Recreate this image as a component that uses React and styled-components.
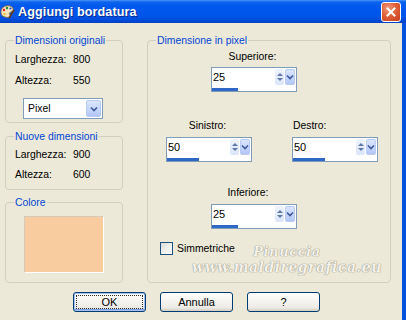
import React from "react";
import styled, { createGlobalStyle } from "styled-components";

const GlobalStyle = createGlobalStyle`
  html, body { margin: 0; padding: 0; background: #ece9d8; }
  body {
    font-family: "Liberation Sans", Arial, sans-serif;
    font-size: 10.4px;
    color: #000;
  }
`;

const Window = styled.div`
  width: 406px;
  height: 320px;
  display: flex;
  flex-direction: column;
  overflow: hidden;
`;

const TitleBar = styled.div`
  height: 23px;
  flex: none;
  display: flex;
  align-items: center;
  padding-right: 5px;
  background: linear-gradient(
    to bottom,
    #4a95f8 0%,
    #0c63ec 9%,
    #0058ee 28%,
    #0055ea 70%,
    #0049d6 90%,
    #003fbf 100%
  );
`;

const TitleText = styled.div`
  flex: 1;
  margin-left: 3px;
  color: #fff;
  font-weight: bold;
  font-size: 12.6px;
  letter-spacing: 0.1px;
  text-shadow: 1px 1px 0 #0a2a88;
`;

const CloseButton = styled.div`
  width: 18px;
  height: 18px;
  border: 1px solid #fff;
  border-radius: 3px;
  display: flex;
  align-items: center;
  justify-content: center;
  background: radial-gradient(circle at 35% 30%, #f19a7c 0%, #e0603a 45%, #c2401c 100%);
`;

const Frame = styled.div`
  flex: 1;
  display: flex;
  flex-direction: column;
  background: #ece9d8;
  border-right: 4px solid #0451de;
  padding: 11px 0 0 5px;
`;

const Columns = styled.div`
  display: grid;
  grid-template-columns: 118px 244px;
  column-gap: 24px;
  height: 249px;
`;

const Stack = styled.div`
  display: flex;
  flex-direction: column;
`;

const Group = styled.fieldset`
  margin: 0;
  margin-top: ${(p) => p.$top || 0}px;
  padding: 0;
  min-width: 0;
  box-sizing: border-box;
  border: 1px solid #d0d0bf;
  border-radius: 4px;
  height: ${(p) => (p.$h ? `${p.$h}px` : "auto")};
  flex: ${(p) => (p.$grow ? 1 : "none")};
  position: relative;
`;

const Legend = styled.legend`
  margin-left: 8px;
  padding: 0 1px;
  color: #0046d5;
  line-height: 13px;
`;

const InfoList = styled.div`
  display: flex;
  flex-direction: column;
  padding: ${(p) => p.$top || 0}px 0 0 9px;
`;

const InfoRow = styled.div`
  display: grid;
  grid-template-columns: 58px auto;
  height: ${(p) => p.$h || 21}px;
  align-items: center;
`;

const Select = styled.div`
  width: 80px;
  height: 21px;
  box-sizing: border-box;
  margin: 7px 0 0 17px;
  border: 1px solid #7f9db9;
  background: #fff;
  display: flex;
  align-items: center;
  justify-content: space-between;
  padding: 1px 1px 1px 4px;
`;

const DropButton = styled.div`
  width: ${(p) => p.$w || 15}px;
  height: ${(p) => p.$hgt || 17}px;
  box-sizing: border-box;
  border: 1px solid #b8cbf4;
  border-radius: 2px;
  background: linear-gradient(to bottom, #dbe6fd 0%, #c3d4fc 60%, #b2c6f5 100%);
  display: flex;
  align-items: center;
  justify-content: center;
`;

const Swatch = styled.div`
  width: 80px;
  height: 57px;
  box-sizing: border-box;
  margin: 7px 0 0 18px;
  background: #f9cc9f;
  border-top: 1px solid #d3cab9;
  border-left: 1px solid #d3cab9;
  border-bottom: 1px solid #fff;
  border-right: 1px solid #fff;
`;

const FieldRow = styled.div`
  display: flex;
  gap: ${(p) => p.$gap || 0}px;
  padding-left: ${(p) => p.$indent || 0}px;
  margin-top: ${(p) => p.$top || 0}px;
`;

const SpinField = styled.div`
  display: flex;
  flex-direction: column;
  align-items: ${(p) => (p.$align === "left" ? "flex-start" : "center")};
  width: 86px;
`;

const FieldLabel = styled.div`
  line-height: 13px;
  margin-bottom: ${(p) => p.$gap || 4}px;
  padding-left: ${(p) => (p.$align === "left" ? 1 : 0)}px;
  margin-right: ${(p) => p.$shift || 0}px;
`;

const SpinBox = styled.div`
  width: 86px;
  height: 25px;
  box-sizing: border-box;
  border: 1px solid #7f9db9;
  background: #fff;
  display: flex;
  flex-direction: column;
  justify-content: space-between;
`;

const SpinTop = styled.div`
  display: flex;
  align-items: flex-start;
  padding: 1px 1px 0 1px;
`;

const SpinValue = styled.div`
  flex: 1;
  font-size: 11px;
  line-height: 15px;
  padding-top: 1px;
`;

const ArrowPair = styled.div`
  width: 9px;
  height: 16px;
  box-sizing: border-box;
  border-radius: 2px;
  background: linear-gradient(to bottom, #eef3fe 0%, #dbe5fb 100%);
  display: flex;
  align-items: center;
  justify-content: center;
  margin-right: 1px;
`;

const SpinBar = styled.div`
  height: 3px;
  background: #2f67c6;
`;

const CheckRow = styled.label`
  display: flex;
  align-items: center;
  gap: 4px;
  margin: 13px 0 0 12px;
`;

const CheckBox = styled.span`
  width: 13px;
  height: 13px;
  box-sizing: border-box;
  border: 1px solid #1c5180;
  background: linear-gradient(135deg, #dcdcd7 0%, #f2f2ef 60%, #fff 100%);
`;

const Watermark = styled.div`
  position: absolute;
  left: 46px;
  top: 197px;
  width: 186px;
  display: flex;
  flex-direction: column;
  align-items: center;
  font-family: "DejaVu Serif", serif;
  font-weight: bold;
  font-style: italic;
  color: #f4f2ea;
  text-shadow: 0 0 1px #8f8b7e, 0 0 1px #8f8b7e;
  pointer-events: none;
`;

const MarkName = styled.div`
  font-size: 13px;
  line-height: 15px;
  letter-spacing: 0.6px;
`;

const MarkSite = styled.div`
  font-size: 14px;
  line-height: 17px;
  letter-spacing: 0.5px;
`;

const ButtonBar = styled.div`
  display: flex;
  gap: 14px;
  padding: 9px 0 0 68px;
`;

const Button = styled.div`
  width: 73px;
  height: 20px;
  box-sizing: border-box;
  border: 1px solid #003c74;
  border-radius: 3px;
  background: linear-gradient(to bottom, #ffffff 0%, #f6f5f1 40%, #ecebe5 80%, #d6d0c5 100%);
  display: flex;
  align-items: center;
  justify-content: center;
  font-size: 11px;
  position: relative;
  box-shadow: ${(p) =>
    p.$default ? "inset 0 0 0 1px #a6c0f0, inset 0 -1px 0 1px #7a9de6" : "inset 0 -1px 0 #d6d0c5"};

  &::after {
    content: "";
    display: ${(p) => (p.$default ? "block" : "none")};
    position: absolute;
    inset: 2px;
    border: 1px dotted #333;
  }
`;

const AppIcon = () => (
  <svg width="15" height="15" viewBox="0 0 15 15">
    <path d="M1 8 C1 3 6 1 10 2 C14 3 14 7 11 8 C9 8.5 9 10 10 11 C11 13 8 14 5 13 C2 12.5 1 10.5 1 8 Z" fill="#f3e3c0" stroke="#8a6a3a" strokeWidth="0.8" />
    <circle cx="4" cy="6" r="1.2" fill="#e02020" />
    <circle cx="7" cy="4" r="1.2" fill="#2a8a2a" />
    <circle cx="10.5" cy="4.5" r="1.1" fill="#2050d0" />
    <circle cx="4.5" cy="10" r="1.2" fill="#f0c020" />
    <path d="M9 14 L14 6" stroke="#6b3a10" strokeWidth="1.6" />
  </svg>
);

const CloseIcon = () => (
  <svg width="10" height="10" viewBox="0 0 10 10">
    <path d="M1.5 1.5 L8.5 8.5 M8.5 1.5 L1.5 8.5" stroke="#fff" strokeWidth="2" strokeLinecap="square" />
  </svg>
);

const Chevron = ({ color = "#4d6185" }) => (
  <svg width="8" height="6" viewBox="0 0 8 6">
    <path d="M1 1.5 L4 4.5 L7 1.5" stroke={color} strokeWidth="1.6" fill="none" />
  </svg>
);

const UpDown = () => (
  <svg width="8" height="12" viewBox="0 0 8 12">
    <path d="M1 5 L4 2 L7 5 Z" fill="#5f79a8" />
    <path d="M1 7 L4 10 L7 7 Z" fill="#5f79a8" />
  </svg>
);

const Spin = ({ value, fill }) => (
  <SpinBox>
    <SpinTop>
      <SpinValue>{value}</SpinValue>
      <ArrowPair>
        <UpDown />
      </ArrowPair>
      <DropButton $w={10} $hgt={16}>
        <Chevron color="#3d5a9a" />
      </DropButton>
    </SpinTop>
    <SpinBar style={{ width: fill }} />
  </SpinBox>
);

const Field = ({ label, value, fill, align, gap, shift }) => (
  <SpinField $align={align}>
    <FieldLabel $align={align} $gap={gap} $shift={shift}>
      {label}
    </FieldLabel>
    <Spin value={value} fill={fill} />
  </SpinField>
);

export default function App() {
  return (
    <>
      <GlobalStyle />
      <Window>
        <TitleBar>
          <AppIcon />
          <TitleText>Aggiungi bordatura</TitleText>
          <CloseButton>
            <CloseIcon />
          </CloseButton>
        </TitleBar>
        <Frame>
          <Columns>
            <Stack>
              <Group $h={89}>
                <Legend>Dimensioni originali</Legend>
                <InfoList $top={2}>
                  <InfoRow>
                    <span>Larghezza:</span>
                    <span>800</span>
                  </InfoRow>
                  <InfoRow>
                    <span>Altezza:</span>
                    <span>550</span>
                  </InfoRow>
                </InfoList>
                <Select>
                  <span>Pixel</span>
                  <DropButton>
                    <Chevron color="#3d5a9a" />
                  </DropButton>
                </Select>
              </Group>
              <Group $h={60} $top={7}>
                <Legend>Nuove dimensioni</Legend>
                <InfoList $top={1}>
                  <InfoRow $h={20}>
                    <span>Larghezza:</span>
                    <span>900</span>
                  </InfoRow>
                  <InfoRow $h={20}>
                    <span>Altezza:</span>
                    <span>600</span>
                  </InfoRow>
                </InfoList>
              </Group>
              <Group $grow $top={6}>
                <Legend>Colore</Legend>
                <Swatch />
              </Group>
            </Stack>
            <Group>
              <Legend>Dimensione in pixel</Legend>
              <FieldRow $indent={63} $top={3}>
                <Field label="Superiore:" value="25" fill={26} shift={3} />
              </FieldRow>
              <FieldRow $indent={18} $top={27} $gap={40}>
                <Field label="Sinistro:" value="50" fill={32} shift={3} gap={5} />
                <Field label="Destro:" value="50" fill={32} align="left" gap={5} />
              </FieldRow>
              <FieldRow $indent={63} $top={24}>
                <Field label="Inferiore:" value="25" fill={26} shift={12} gap={5} />
              </FieldRow>
              <CheckRow>
                <CheckBox />
                <span>Simmetriche</span>
              </CheckRow>
              <Watermark>
                <MarkName>Pinuccia</MarkName>
                <MarkSite>www.maldiregrafica.eu</MarkSite>
              </Watermark>
            </Group>
          </Columns>
          <ButtonBar>
            <Button $default>OK</Button>
            <Button>Annulla</Button>
            <Button>?</Button>
          </ButtonBar>
        </Frame>
      </Window>
    </>
  );
}
